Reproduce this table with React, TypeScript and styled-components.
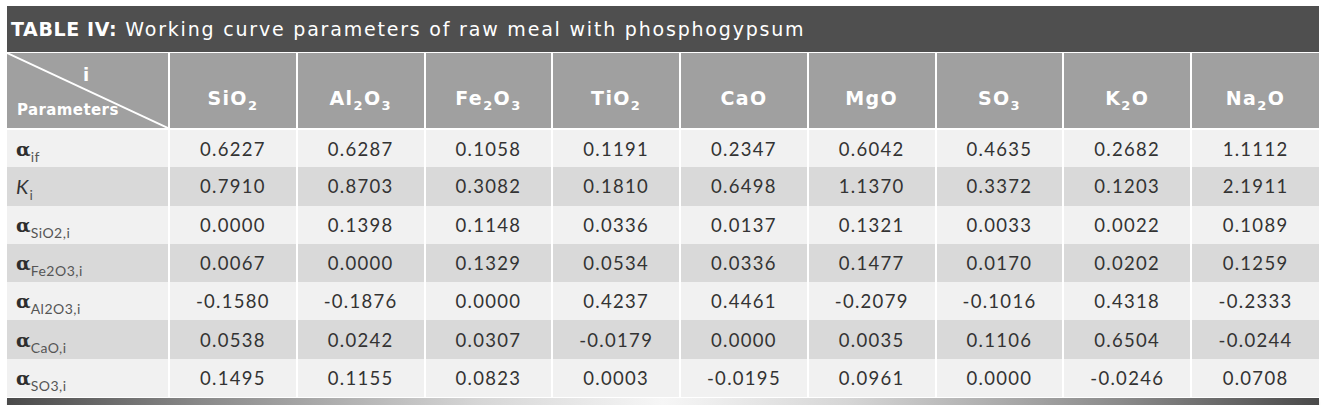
import React from 'react';
import styled, {createGlobalStyle} from 'styled-components';

const GlobalStyle = createGlobalStyle`
  html, body {
    margin: 0;
    padding: 0;
    background: #ffffff;
  }
  body {
    font-family: Lato, "Open Sans", sans-serif;
  }
`;

const Wrapper = styled.div`
  width: 1312px;
  margin: 6px 0 0 7px;
`;

const TitleBar = styled.div`
  height: 46px;
  background-color: #4f4f4f; // dark grey
  color: #ffffff;
  display: flex;
  align-items: center;
  padding-left: 4px;
  font-family: "DejaVu Sans", sans-serif;
  font-size: 19px;
  letter-spacing: 1.8px;
  white-space: nowrap;
`;

const TitleStrong = styled.span`
  font-weight: bold;
  letter-spacing: 0.6px;
  margin-right: 8px;
`;

const Table = styled.table`
  width: 100%;
  border-collapse: collapse;
  table-layout: fixed;
`;

const HeadCell = styled.th`
  background-color: #a0a0a0;
  color: #ffffff;
  height: 61px;
  padding: 14px 0 0 0;
  font-family: "DejaVu Sans", sans-serif;
  font-size: 19px;
  font-weight: bold;
  letter-spacing: 1.4px;
  text-align: center;
  border-left: 2px solid #ffffff;
  border-top: 1px solid #ffffff;
  border-bottom: 2px solid #ffffff;
  &:first-child {
    border-left: none;
  }
`;

const CornerCell = styled(HeadCell)`
  position: relative;
  width: 161px;
  height: 75px;
  padding: 0;
`;

const CornerI = styled.span`
  position: absolute;
  top: 11px;
  left: 76px;
  font-size: 18px;
`;

const CornerParams = styled.span`
  position: absolute;
  left: 10px;
  bottom: 9px;
  font-size: 15px;
  letter-spacing: 0.4px;
`;

const Diagonal = styled.svg`
  position: absolute;
  left: 0;
  top: 0;
`;

const Row = styled.tr<{ $dark: boolean }>`
  height: 38.3px;
  background-color: ${props => props.$dark ? '#d9d9d9' : '#f1f1f1'};
`;

const LabelCell = styled.td`
  padding: 0 0 0 9px;
  color: #333333;
  font-size: 18px;
  text-align: left;
  white-space: nowrap;
`;

const ValueCell = styled.td`
  padding: 0;
  color: #333333;
  font-size: 18.5px;
  text-align: center;
  letter-spacing: 1.3px;
  border-left: 2px solid #ffffff;
`;

const Alpha = styled.span`
  font-family: "DejaVu Serif", "Liberation Serif", serif;
  font-weight: bold;
  font-size: 19px;
  color: #2e2e2e;
`;

const KLetter = styled.span`
  font-style: italic;
  font-size: 20px;
  letter-spacing: 1px;
`;

const LabelSub = styled.sub`
  font-size: 14px;
  color: #555555;
  letter-spacing: 0.5px;
  vertical-align: -6px;
  line-height: 0;
`;

const HeadSub = styled.sub`
  font-size: 13px;
  vertical-align: -5px;
  line-height: 0;
`;

const BottomBar = styled.div`
  height: 7px;
  margin-top: 1px;
  background: linear-gradient(to right, #4a4a4a 0%, #8a8a8a 15%, #d6d6d6 36%, #f6f6f6 50%, #d6d6d6 64%, #8a8a8a 85%, #4a4a4a 100%);
  box-shadow: 0 2px 2px rgba(0, 0, 0, 0.15);
`;

type Oxide = { base: string; sub?: string; tail?: string; sub2?: string };

const oxides: Oxide[] = [
  {base: 'SiO', sub: '2'},
  {base: 'Al', sub: '2', tail: 'O', sub2: '3'},
  {base: 'Fe', sub: '2', tail: 'O', sub2: '3'},
  {base: 'TiO', sub: '2'},
  {base: 'CaO'},
  {base: 'MgO'},
  {base: 'SO', sub: '3'},
  {base: 'K', sub: '2', tail: 'O'},
  {base: 'Na', sub: '2', tail: 'O'},
];

const rows: { kind: 'alpha' | 'k'; sub: string; values: string[] }[] = [
  {kind: 'alpha', sub: 'if', values: ['0.6227', '0.6287', '0.1058', '0.1191', '0.2347', '0.6042', '0.4635', '0.2682', '1.1112']},
  {kind: 'k', sub: 'i', values: ['0.7910', '0.8703', '0.3082', '0.1810', '0.6498', '1.1370', '0.3372', '0.1203', '2.1911']},
  {kind: 'alpha', sub: 'SiO2,i', values: ['0.0000', '0.1398', '0.1148', '0.0336', '0.0137', '0.1321', '0.0033', '0.0022', '0.1089']},
  {kind: 'alpha', sub: 'Fe2O3,i', values: ['0.0067', '0.0000', '0.1329', '0.0534', '0.0336', '0.1477', '0.0170', '0.0202', '0.1259']},
  {kind: 'alpha', sub: 'Al2O3,i', values: ['-0.1580', '-0.1876', '0.0000', '0.4237', '0.4461', '-0.2079', '-0.1016', '0.4318', '-0.2333']},
  {kind: 'alpha', sub: 'CaO,i', values: ['0.0538', '0.0242', '0.0307', '-0.0179', '0.0000', '0.0035', '0.1106', '0.6504', '-0.0244']},
  {kind: 'alpha', sub: 'SO3,i', values: ['0.1495', '0.1155', '0.0823', '0.0003', '-0.0195', '0.0961', '0.0000', '-0.0246', '0.0708']},
];

export function App() {
  return (
    <Wrapper>
      <GlobalStyle/>
      <TitleBar>
        <TitleStrong>TABLE IV:</TitleStrong>
        Working curve parameters of raw meal with phosphogypsum
      </TitleBar>
      <Table>
        <thead>
          <tr>
            <CornerCell>
              <Diagonal width="161" height="75" viewBox="0 0 161 75">
                <line x1="0" y1="0" x2="161" y2="75" stroke="#ffffff" strokeWidth="2"/>
              </Diagonal>
              <CornerI>i</CornerI>
              <CornerParams>Parameters</CornerParams>
            </CornerCell>
            {oxides.map((o, key) => (
              <HeadCell key={key}>
                {o.base}
                {o.sub && <HeadSub>{o.sub}</HeadSub>}
                {o.tail}
                {o.sub2 && <HeadSub>{o.sub2}</HeadSub>}
              </HeadCell>
            ))}
          </tr>
        </thead>
        <tbody>
          {rows.map((r, i) => (
            <Row key={i} $dark={i % 2 === 1}>
              <LabelCell>
                {r.kind === 'alpha' ? <Alpha>α</Alpha> : <KLetter>K</KLetter>}
                <LabelSub>{r.sub}</LabelSub>
              </LabelCell>
              {r.values.map((v, key) => (
                <ValueCell key={key}>{v}</ValueCell>
              ))}
            </Row>
          ))}
        </tbody>
      </Table>
      <BottomBar/>
    </Wrapper>
  );
}

export default App;
